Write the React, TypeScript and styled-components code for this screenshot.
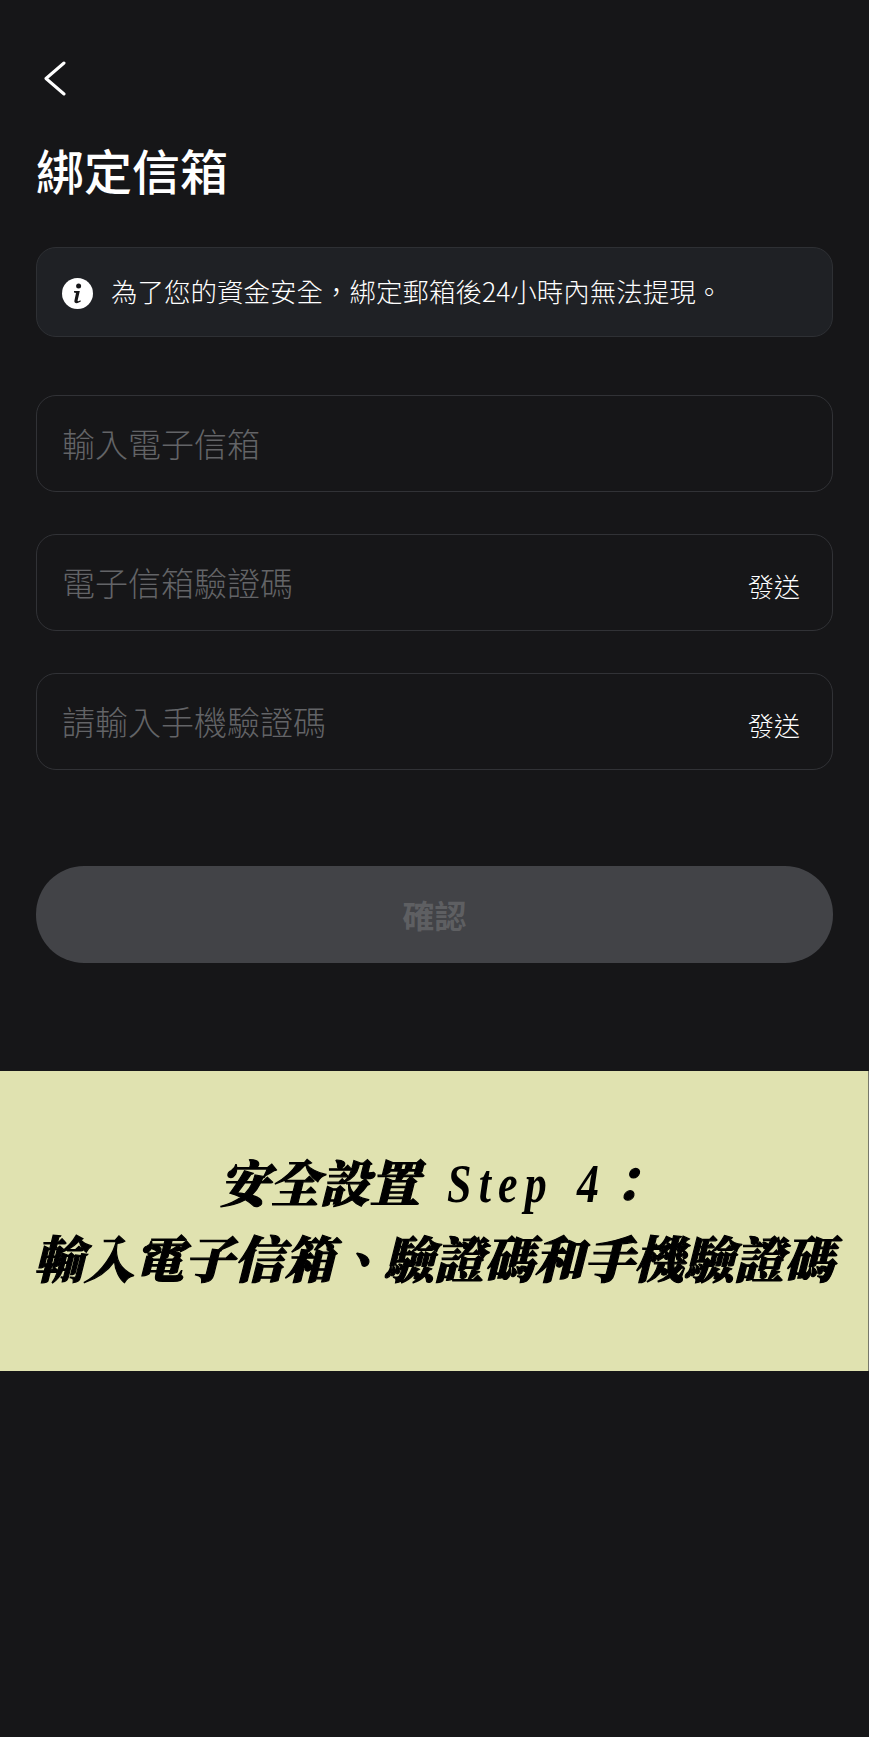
import styled, { createGlobalStyle } from 'styled-components';

const sans = `"Noto Sans CJK TC", "Noto Sans", sans-serif`;

const GlobalStyle = createGlobalStyle`
  html, body {
    margin: 0;
    padding: 0;
    background: #161618;
  }
  * {
    box-sizing: border-box;
  }
`;

const App = () => {
  return (
    <Page>
      <GlobalStyle />
      <Form>
        <BackButton aria-label="back">
          <svg width="22" height="35" viewBox="0 0 22 35" fill="none">
            <path
              d="M20 2 L2 17.5 L20 33"
              stroke="#ffffff"
              strokeWidth="3"
              strokeLinecap="round"
              strokeLinejoin="round"
            />
          </svg>
        </BackButton>
        <Title>綁定信箱</Title>
        <Notice>
          <svg width="31" height="31" viewBox="0 0 31 31">
            <circle cx="15.5" cy="15.5" r="15.5" fill="#ffffff" />
            <circle cx="16.6" cy="8" r="2.5" fill="#161618" />
            <path
              d="M12 13 H17.8 L15.6 22.4 C15.4 23.3 16.2 23.5 18.4 22.3 L18.8 23.6 C16.6 25.4 11.8 26.2 12.4 22.8 L14 15 L12 14.6 Z"
              fill="#161618"
            />
          </svg>
          <NoticeText>為了您的資金安全，綁定郵箱後24小時內無法提現。</NoticeText>
        </Notice>
        <Fields>
          <Field>
            <Placeholder>輸入電子信箱</Placeholder>
          </Field>
          <Field>
            <Placeholder>電子信箱驗證碼</Placeholder>
            <SendLink>發送</SendLink>
          </Field>
          <Field>
            <Placeholder>請輸入手機驗證碼</Placeholder>
            <SendLink>發送</SendLink>
          </Field>
        </Fields>
        <ConfirmButton disabled>確認</ConfirmButton>
      </Form>
      <Caption>
        <CaptionTitle>
          安全設置<CaptionLatin>Step 4</CaptionLatin>：
        </CaptionTitle>
        <CaptionLine>輸入電子信箱、驗證碼和手機驗證碼</CaptionLine>
      </Caption>
    </Page>
  );
};

const Page = styled.div`
  width: 869px;
  height: 1737px;
  overflow: hidden;
  background: #161618;
  font-family: ${sans};
`;

const Form = styled.div`
  height: 1071px;
  padding: 61px 36px 0;
  display: flex;
  flex-direction: column;
`;

const BackButton = styled.button`
  width: 22px;
  height: 35px;
  margin-left: 8px;
  padding: 0;
  border: 0;
  background: none;
  display: block;
  align-self: flex-start;
`;

const Title = styled.h1`
  margin: 44px 0 0;
  height: 58px;
  font-size: 48px;
  line-height: 58px;
  font-weight: 500;
  color: #ffffff;
`;

const Notice = styled.div`
  margin-top: 49px;
  height: 90px;
  padding: 0 25px 0 25px;
  display: flex;
  align-items: center;
  gap: 18px;
  background: #1f2125;
  border: 1.5px solid #2e3034;
  border-radius: 20px;

  svg {
    flex: none;
    margin-top: 3px;
  }
`;

const NoticeText = styled.span`
  font-size: 26.5px;
  line-height: 32px;
  font-weight: 300;
  color: #ffffff;
  white-space: nowrap;
  margin-top: -3px;
`;

const Fields = styled.div`
  margin-top: 58px;
  display: flex;
  flex-direction: column;
  gap: 42px;
`;

const Field = styled.div`
  height: 97px;
  padding: 0 32px 0 25px;
  display: flex;
  align-items: center;
  justify-content: space-between;
  border: 1.5px solid #313236;
  border-radius: 20px;
`;

const Placeholder = styled.span`
  font-size: 33px;
  line-height: 40px;
  font-weight: 300;
  color: #636467;
  white-space: nowrap;
  margin-top: -2px;
`;

const SendLink = styled.span`
  font-size: 26px;
  line-height: 32px;
  font-weight: 300;
  color: #ffffff;
  margin-top: 6px;
`;

const ConfirmButton = styled.button`
  margin-top: 96px;
  height: 97px;
  padding: 0 0 2px;
  border: 0;
  border-radius: 48px;
  background: #424347;
  color: #5e5f62;
  font-family: inherit;
  font-size: 32px;
  font-weight: 700;
`;

const Caption = styled.div`
  height: 300px;
  background: #e0e2b0;
  border-right: 1.5px solid #77786a;
  padding-top: 79px;
  display: flex;
  flex-direction: column;
  align-items: center;
  gap: 12px;
`;

const CaptionLine = styled.div`
  font-family: "Noto Serif CJK TC", "Liberation Serif", "Noto Sans CJK TC", serif;
  font-size: 50px;
  line-height: 60px;
  font-weight: 900;
  font-style: italic;
  color: #000000;
  white-space: nowrap;
  -webkit-text-stroke: 1.2px #000000;
`;

const CaptionTitle = styled(CaptionLine)`
  padding-left: 4px;
`;

const CaptionLatin = styled.span`
  display: inline-block;
  font-family: "Liberation Serif", serif;
  font-size: 55px;
  font-weight: 700;
  letter-spacing: 9px;
  word-spacing: 6px;
  margin: 0 -44px 0 28px;
  transform: scaleX(0.8);
  transform-origin: left center;
  -webkit-text-stroke: 0;
`;

export default App;
